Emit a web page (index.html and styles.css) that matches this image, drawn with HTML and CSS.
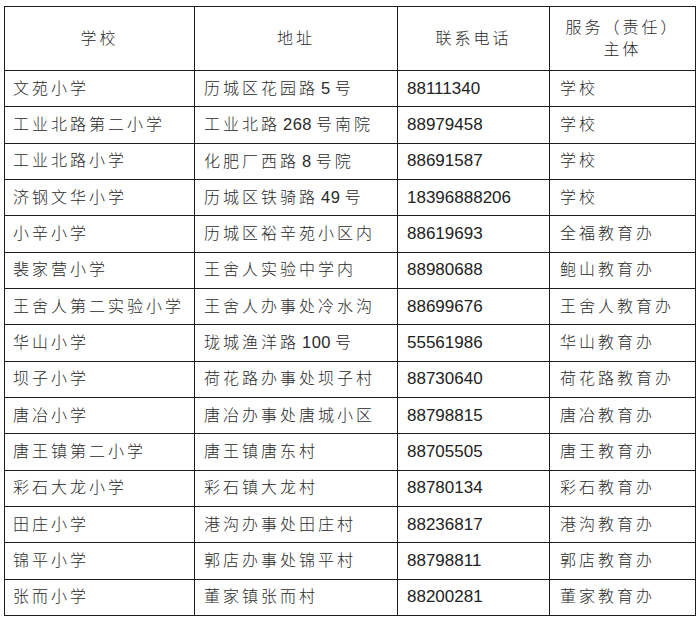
FILE: index.html
```html
<!DOCTYPE html>
<html lang="zh-CN">
<head>
<meta charset="utf-8">
<title>学校</title>
<link rel="stylesheet" href="styles.css">
</head>
<body>
<table class="tbl">
  <colgroup>
    <col class="c1"><col class="c2"><col class="c3"><col class="c4">
  </colgroup>
  <thead>
    <tr class="head">
      <th>学校</th>
      <th>地址</th>
      <th>联系电话</th>
      <th class="two">服务（责任）<br>主体</th>
    </tr>
  </thead>
  <tbody>
    <tr><td>文苑小学</td><td>历城区花园路<span class="n">5</span>号</td><td class="ph">88111340</td><td>学校</td></tr>
    <tr><td>工业北路第二小学</td><td>工业北路<span class="n">268</span>号南院</td><td class="ph">88979458</td><td>学校</td></tr>
    <tr><td>工业北路小学</td><td>化肥厂西路<span class="n">8</span>号院</td><td class="ph">88691587</td><td>学校</td></tr>
    <tr><td>济钢文华小学</td><td>历城区铁骑路<span class="n">49</span>号</td><td class="ph">18396888206</td><td>学校</td></tr>
    <tr><td>小辛小学</td><td>历城区裕辛苑小区内</td><td class="ph">88619693</td><td>全福教育办</td></tr>
    <tr><td>裴家营小学</td><td>王舍人实验中学内</td><td class="ph">88980688</td><td>鲍山教育办</td></tr>
    <tr><td>王舍人第二实验小学</td><td>王舍人办事处冷水沟</td><td class="ph">88699676</td><td>王舍人教育办</td></tr>
    <tr><td>华山小学</td><td>珑城渔洋路<span class="n">100</span>号</td><td class="ph">55561986</td><td>华山教育办</td></tr>
    <tr><td>坝子小学</td><td>荷花路办事处坝子村</td><td class="ph">88730640</td><td>荷花路教育办</td></tr>
    <tr><td>唐冶小学</td><td>唐冶办事处唐城小区</td><td class="ph">88798815</td><td>唐冶教育办</td></tr>
    <tr><td>唐王镇第二小学</td><td>唐王镇唐东村</td><td class="ph">88705505</td><td>唐王教育办</td></tr>
    <tr><td>彩石大龙小学</td><td>彩石镇大龙村</td><td class="ph">88780134</td><td>彩石教育办</td></tr>
    <tr><td>田庄小学</td><td>港沟办事处田庄村</td><td class="ph">88236817</td><td>港沟教育办</td></tr>
    <tr><td>锦平小学</td><td>郭店办事处锦平村</td><td class="ph">88798811</td><td>郭店教育办</td></tr>
    <tr><td>张而小学</td><td>董家镇张而村</td><td class="ph">88200281</td><td>董家教育办</td></tr>
  </tbody>
</table>
</body>
</html>
```

FILE: styles.css
```css
html, body {
  margin: 0;
  padding: 0;
  background: #ffffff;
}
body {
  padding: 6px 0 0 4px;
  font-family: "Liberation Sans", "Noto Sans CJK SC", sans-serif;
  color: #2a2a2a;
}
.tbl {
  border-collapse: collapse;
  table-layout: fixed;
  width: 691px;
}
.c1 { width: 190px; }
.c2 { width: 203px; }
.c3 { width: 152px; }
.c4 { width: 146px; }
.tbl th, .tbl td {
  border: 1px solid #1e1e1e;
  padding: 0 0 0 9px;
  font-size: 16px;
  font-weight: 300;
  letter-spacing: 3px;
  text-align: left;
  vertical-align: middle;
  white-space: nowrap;
  overflow: hidden;
  line-height: 22px;
}
.tbl td:first-child { padding-left: 8px; }
.tbl td:last-child { padding-left: 10px; }
.head th {
  height: 63px;
  text-align: center;
  padding: 0;
  font-weight: 300;
}
.head th.two {
  line-height: 22px;
  padding-top: 0;
}
.tbl tbody tr { height: 36.33px; }
.tbl td.ph {
  font-size: 17px;
  letter-spacing: 0;
  font-weight: 400;
  color: #222;
}
.n {
  letter-spacing: 0.5px;
  font-size: 16.5px;
  font-weight: 400;
  margin: 0 4px 0 3px;
}
```
